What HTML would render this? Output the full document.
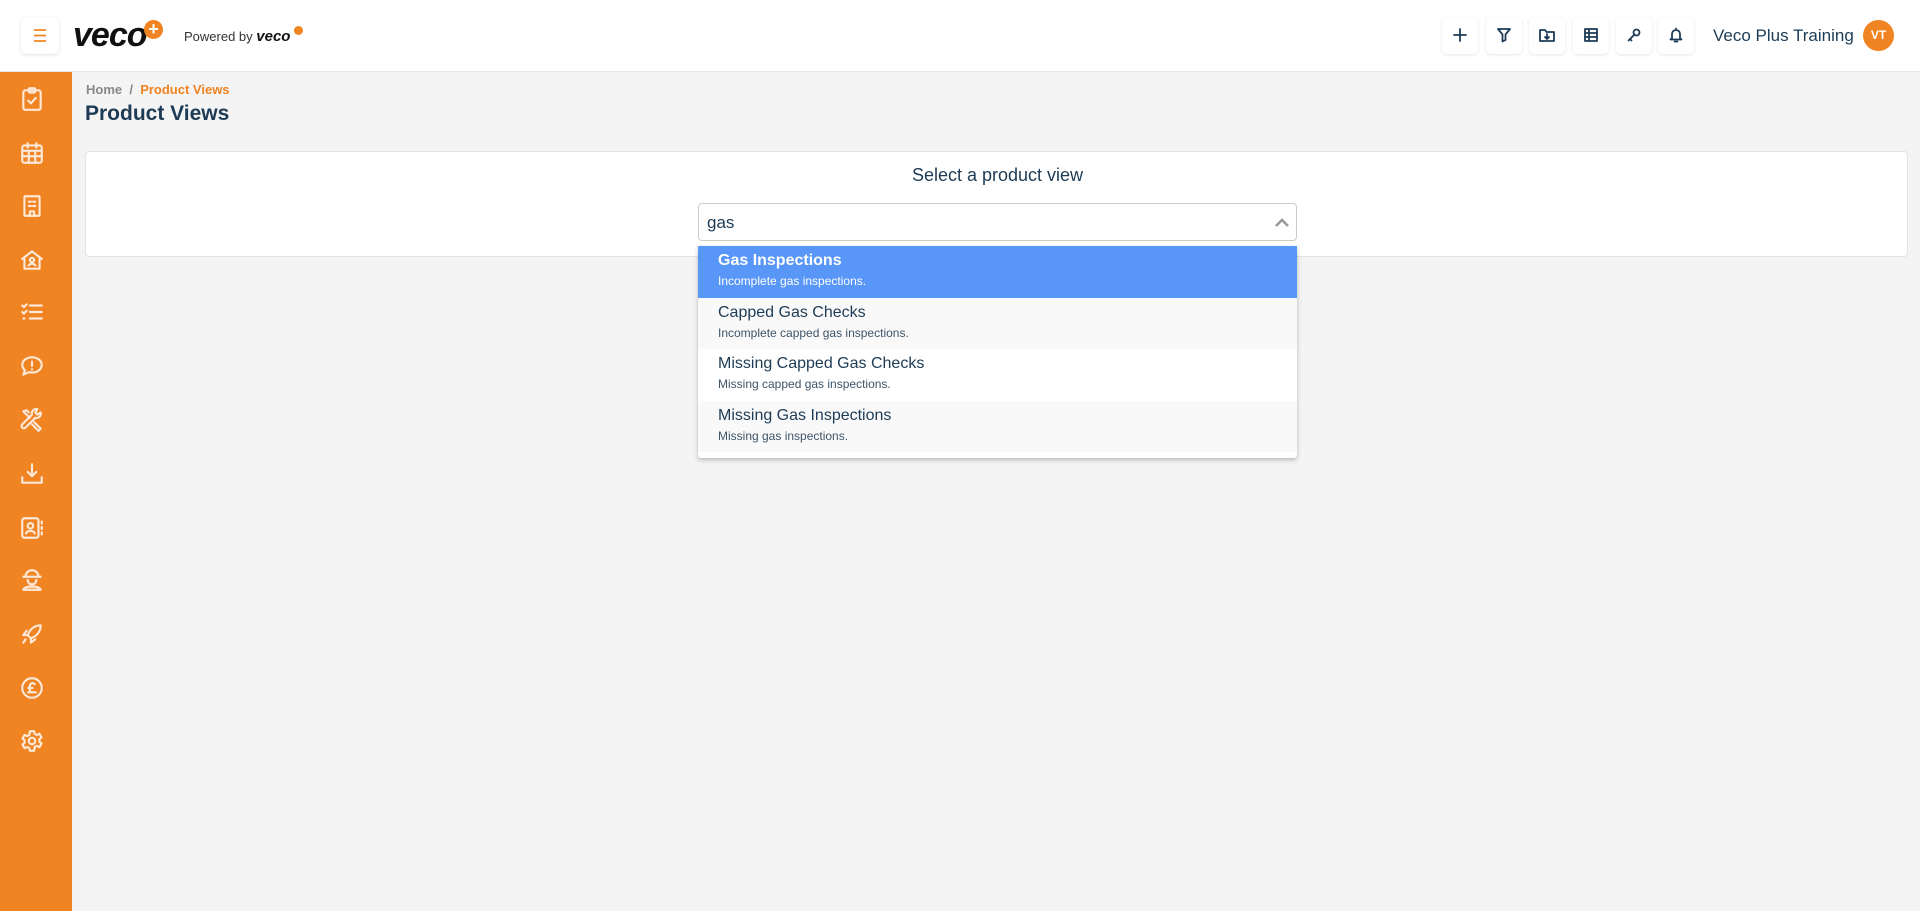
<!DOCTYPE html>
<html><head><meta charset="utf-8"><style>
*{box-sizing:border-box;margin:0;padding:0}
body{width:1920px;height:911px;background:#f4f4f4;font-family:"Liberation Sans",sans-serif;color:#1d3b55;position:relative;overflow:hidden}
.hdr{position:absolute;left:0;top:0;width:1920px;height:72px;background:#fff;border-bottom:1px solid #e6e6e6}
.side{position:absolute;left:0;top:72px;width:72px;height:839px;background:#f08322}
.side svg{position:absolute;left:19px;width:26px;height:26px;fill:none;stroke:#fbe8d6;stroke-width:2;stroke-linecap:round;stroke-linejoin:round}
.hb{position:absolute;left:21px;top:17px;width:38px;height:37px;border-radius:5px;box-shadow:0 1px 3px rgba(0,0,0,.12);background:#fff}
.ib{position:absolute;top:17px;width:36px;height:37px;border-radius:5px;box-shadow:0 1px 3px rgba(0,0,0,.1);background:#fff}
.ib svg{position:absolute;left:9px;top:9px;width:18px;height:18px;fill:none;stroke:#1d3b55;stroke-width:1.8;stroke-linecap:round;stroke-linejoin:round}
.card{position:absolute;left:85px;top:151px;width:1823px;height:106px;background:#fff;border:1px solid #e3e3e3;border-radius:4px}
.inp{position:absolute;left:698px;top:203px;width:599px;height:38px;background:#fff;border:1px solid #ccc;border-radius:4px;font-size:17px;padding:9px 8px}
.dd{position:absolute;left:698px;top:246px;width:599px;height:212px;background:#fff;box-shadow:0 2px 5px rgba(0,0,0,.25);border-radius:0 0 3px 3px;overflow:hidden}
.it{height:51.5px;padding:5px 20px}
.it b{display:block;font-size:16px;font-weight:normal;line-height:20px}
.it span{display:block;font-size:12px;line-height:20px;color:#3d5468}
</style></head><body>
<div class="hdr">
 <div class="hb"><svg width="38" height="37"><path d="M13 13h12M13 18.5h12M13 24h12" stroke="#f08322" stroke-width="1.8"/></svg></div>
 <div style="position:absolute;left:73px;top:16px;font-size:34px;font-weight:bold;font-style:italic;color:#111;letter-spacing:-1px">veco</div>
 <div style="position:absolute;left:144px;top:20px;width:19px;height:19px;border-radius:50%;background:#f08322;color:#fff;font-size:18px;line-height:18px;text-align:center;font-weight:bold">+</div>
 <div style="position:absolute;left:184px;top:28px;font-size:13px;color:#333">Powered by <b style="font-style:italic;font-size:15px;color:#111">veco</b></div>
 <div style="position:absolute;left:294px;top:26px;width:9px;height:9px;border-radius:50%;background:#f08322"></div>
 <div class="ib" style="left:1442px"><svg viewBox="0 0 18 18"><path d="M9 3v12M3 9h12"/></svg></div>
 <div class="ib" style="left:1486px"><svg viewBox="0 0 18 18"><path d="M3 3h12l-4.5 5.5V14l-3 1.5V8.5z"/></svg></div>
 <div class="ib" style="left:1529px"><svg viewBox="0 0 18 18"><path d="M2 4h5l1.5 2H16v9H2z M9 8v5M7 11l2 2 2-2"/></svg></div>
 <div class="ib" style="left:1573px"><svg viewBox="0 0 18 18"><path d="M3 3h12v12H3zM3 7h12M3 11h12M7 3v12"/></svg></div>
 <div class="ib" style="left:1616px"><svg viewBox="0 0 18 18"><circle cx="11.5" cy="6.5" r="3"/><path d="M9.5 8.5L3.5 14.5M5 13l1.5 1.5"/></svg></div>
 <div class="ib" style="left:1658px"><svg viewBox="0 0 18 18"><path d="M5 12V8a4 4 0 018 0v4l1.5 1.5h-11zM7.5 15.5h3M9 2.5v1"/></svg></div>
 <div style="position:absolute;left:1713px;top:26px;font-size:17px;color:#1d3b55">Veco Plus Training</div>
 <div style="position:absolute;left:1863px;top:20px;width:31px;height:31px;border-radius:50%;background:#f08322;color:#fff;font-size:12px;font-weight:bold;text-align:center;line-height:31px">VT</div>
</div>
<div class="side">
 <svg viewBox="0 0 24 24" style="top:14px"><rect x="4" y="4" width="16" height="18" rx="2"/><rect x="9" y="2" width="6" height="4" rx="1"/><path d="M8.5 13.5l2.5 2.5 4.5-5"/></svg>
 <svg viewBox="0 0 24 24" style="top:68px"><rect x="3" y="5" width="18" height="16" rx="2"/><path d="M3 10h18M3 15h18M9 10v11M15 10v11M8 3v4M16 3v4"/></svg>
 <svg viewBox="0 0 24 24" style="top:121px"><rect x="5" y="3" width="14" height="18" rx="1"/><path d="M9 8h2M13 8h2M9 12h2M13 12h2M10 21v-4h4v4"/></svg>
 <svg viewBox="0 0 24 24" style="top:175px"><path d="M3 11l9-7 9 7M5 10v10h14V10"/><circle cx="12" cy="12" r="2"/><path d="M9 17c1-2 5-2 6 0"/></svg>
 <svg viewBox="0 0 24 24" style="top:227px"><path d="M10 6h11M10 12h11M10 18h11M3 6l1.5 1.5L7 5M3 12l1.5 1.5L7 11M4 18h1"/></svg>
 <svg viewBox="0 0 24 24" style="top:281px"><path d="M12 4c5 0 9 3 9 7s-4 7-9 7c-1 0-2 0-3-.3L4 20l1.5-4C4 14.6 3 13 3 11c0-4 4-7 9-7zM12 8v4M12 15v.2"/></svg>
 <svg viewBox="0 0 24 24" style="top:335px"><path d="M4 4l6 6M4 4l3-1 2 2M14 14l6 6-2 2-6-6M20 5a4 4 0 01-5 5L6 19a2 2 0 01-3-3l9-9a4 4 0 015-5l-2 3 2 2z"/></svg>
 <svg viewBox="0 0 24 24" style="top:389px"><path d="M12 3v11M8 10l4 4 4-4M3 15v5h18v-5"/></svg>
 <svg viewBox="0 0 24 24" style="top:443px"><rect x="3" y="3" width="15" height="18" rx="2"/><circle cx="10.5" cy="10" r="2.5"/><path d="M6.5 17c1-3 7-3 8 0M21 6v2M21 11v2M21 16v2"/></svg>
 <svg viewBox="0 0 24 24" style="top:495px"><path d="M6 9a6 6 0 0112 0zM4 9h16M8 12a4 4 0 008 0M4 21c1-4 15-4 16 0z"/></svg>
 <svg viewBox="0 0 24 24" style="top:549px"><path d="M20 4c-6 0-10 4-12 9l3 3c5-2 9-6 9-12zM8 13l-4 0 3-4M11 16v4l4-3M6 17l-2 3"/></svg>
 <svg viewBox="0 0 24 24" style="top:603px"><circle cx="12" cy="12" r="9"/><path d="M14.5 8.5a2.5 2.5 0 00-4.5 1.5v6M8.5 12h4M8.5 16h7"/></svg>
 <svg viewBox="0 0 24 24" style="top:656px"><circle cx="12" cy="12" r="3"/><path d="M10 3h4l.5 2.5 2 1 2.3-1.2 2 3.4-2 1.6v2.4l2 1.6-2 3.4-2.3-1.2-2 1L14 21h-4l-.5-2.5-2-1-2.3 1.2-2-3.4 2-1.6v-2.4l-2-1.6 2-3.4 2.3 1.2 2-1z"/></svg>
</div>
<div style="position:absolute;left:86px;top:82px;font-size:13px;color:#888;font-weight:bold">Home &nbsp;/&nbsp; <span style="color:#f08322">Product Views</span></div>
<div style="position:absolute;left:85px;top:102px;font-size:21px;font-weight:bold;color:#1d3b55">Product Views</div>
<div class="card"></div>
<div style="position:absolute;left:698px;width:599px;top:165px;text-align:center;font-size:18px">Select a product view</div>
<div class="inp">gas<svg style="position:absolute;right:6px;top:12px" width="16" height="12" viewBox="0 0 16 12"><path d="M2 10l6-6 6 6" fill="none" stroke="#999" stroke-width="2.6"/></svg></div>
<div class="dd">
 <div class="it" style="background:#5896f7;color:#fff"><b style="font-weight:bold">Gas Inspections</b><span style="color:#fff">Incomplete gas inspections.</span></div>
 <div class="it" style="background:#f9f9f9"><b>Capped Gas Checks</b><span>Incomplete capped gas inspections.</span></div>
 <div class="it"><b>Missing Capped Gas Checks</b><span>Missing capped gas inspections.</span></div>
 <div class="it" style="background:#f9f9f9"><b>Missing Gas Inspections</b><span>Missing gas inspections.</span></div>
</div>
</body></html>
